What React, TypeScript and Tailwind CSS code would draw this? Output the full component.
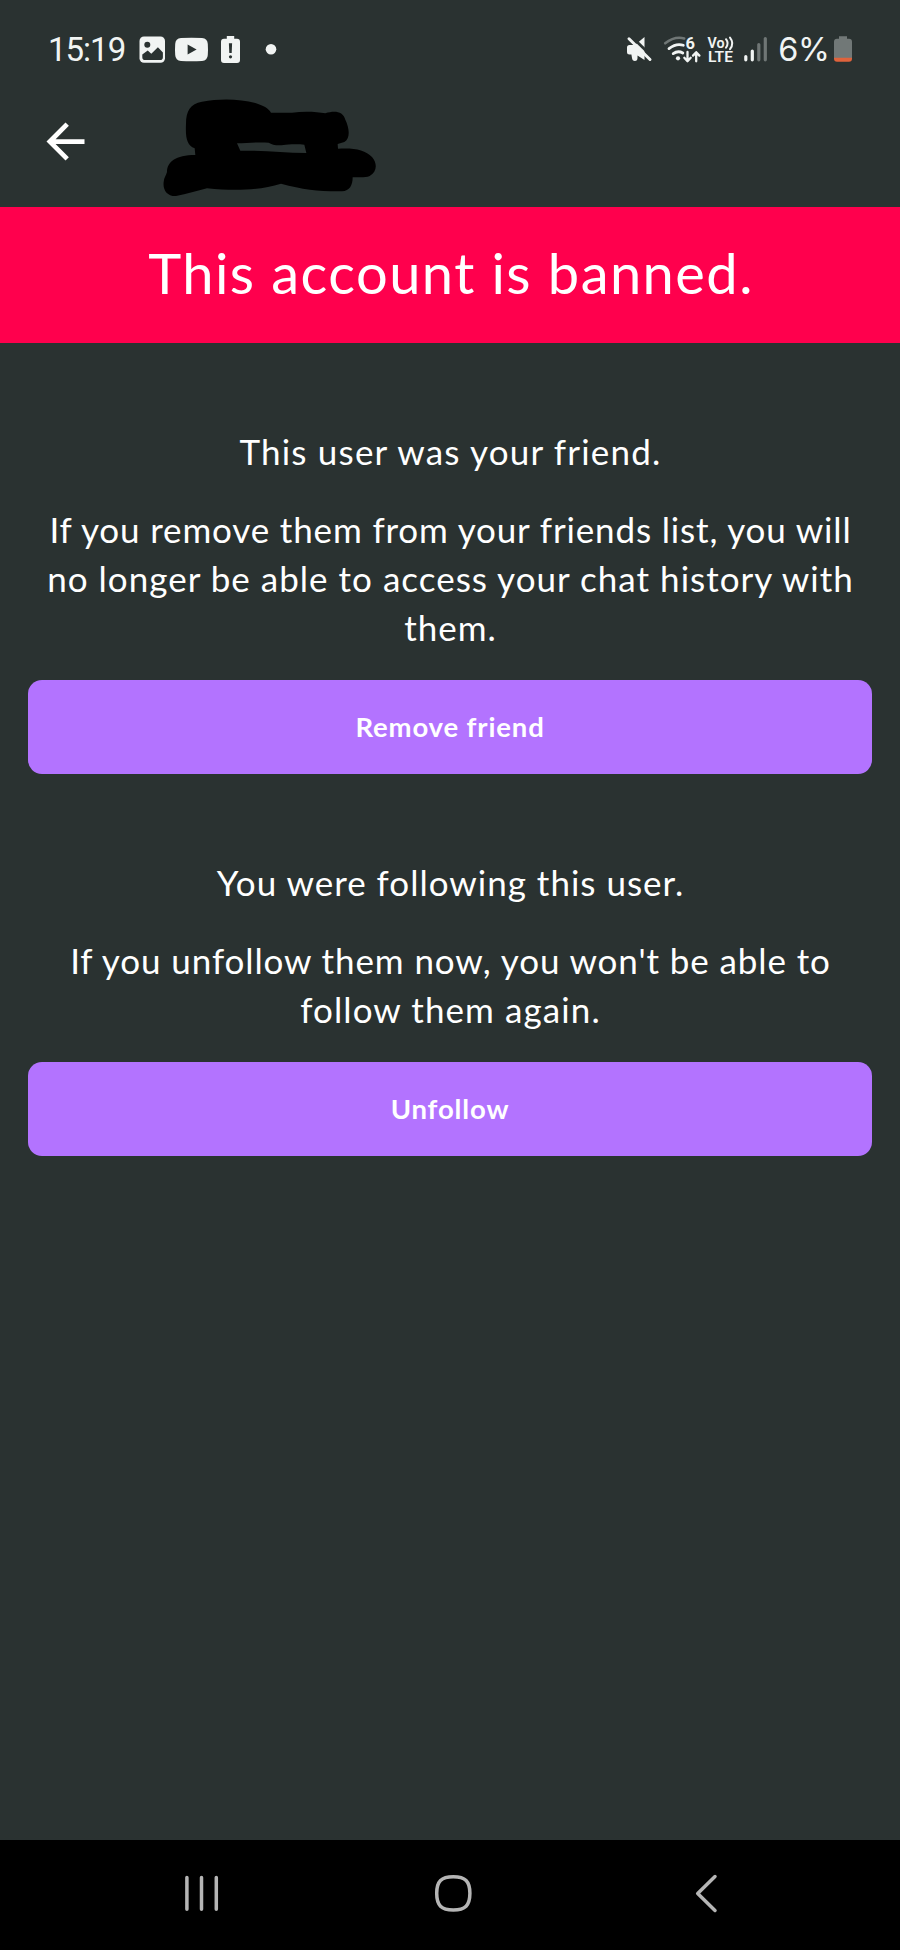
import type { ReactNode } from "react";

function NotificationIcons() {
  return (
    <svg className="h-[40px] w-[142px]" viewBox="136 30 142 40" fill="#f1f4f3">
      {/* gallery */}
      <rect x="139.5" y="36.5" width="25.5" height="26.3" rx="4.5" />
      <circle cx="147.3" cy="44.8" r="3" fill="#2a3231" />
      <path
        d="M142.3 57.2v-2.6l5.4-4.2 3.6 3.4 6.6-6.6 5 5.3v4.7q0 2.8-2.8 2.8h-15q-2.8 0-2.8-2.8z"
        fill="#2a3231"
      />
      {/* video */}
      <path d="M181 38q10.500-.7 21 0 5.500.4 5.800 6 .4 5.500 0 11-.3 5.600-5.800 6-10.500.7-21 0-5.500-.4-5.800-6-.4-5.500 0-11 .3-5.600 5.800-6z" />
      <path d="M187.600 44.600v10l9-5z" fill="#2a3231" />
      {/* battery alert */}
      <path d="M226.800 36h7.400v2.700h2.800q3 0 3 3V60q0 3-3 3h-13q-3 0-3-3V41.700q0-3 3-3h2.800z" />
      <path d="M228.900 43.300h3.200l-.4 9.600h-2.400z" fill="#2a3231" />
      <circle cx="230.500" cy="56.800" r="1.600" fill="#2a3231" />
      <circle cx="271" cy="49.200" r="5.300" />
    </svg>
  );
}

function SystemIcons() {
  return (
    <svg className="h-[40px] w-[148px]" viewBox="624 30 148 40" fill="none">
      {/* muted speaker */}
      <path
        d="M629.500 45h5.500L644.500 37v23l-7-4.500v2.500q0 3-2.600 3t-2.900-3l-.6-3.600h-1.900q-2.500 0-2.500-2.500v-4.400q0-2.500 2.500-2.500z"
        fill="#f1f4f3"
      />
      <path d="M631 36l22.500 22" stroke="#2a3231" strokeWidth="2.800" />
      <path d="M629 38.800l21 20.700" stroke="#f1f4f3" strokeWidth="3" strokeLinecap="round" />
      {/* wifi 6 */}
      <path d="M665.200 43.300q9.300-7.400 19-4.900" stroke="#6f7675" strokeWidth="2.600" strokeLinecap="round" />
      <path d="M669 48.600q7.500-5.800 14.300-3.300" stroke="#f1f4f3" strokeWidth="2.800" strokeLinecap="round" />
      <path d="M673.200 53.600q4.800-3.400 9.600-.6" stroke="#f1f4f3" strokeWidth="2.800" strokeLinecap="round" />
      <circle cx="678" cy="58.300" r="2.100" fill="#f1f4f3" />
      <text x="685.500" y="48.500" fontFamily="Roboto, sans-serif" fontWeight="700" fontSize="16.500" fill="#f1f4f3">6</text>
      <path
        d="M687.500 52v8.600M684.300 57.800l3.200 3.400 3.200-3.400M696.200 61.300v-8.500M693 55.600l3.200-3.400 3.200 3.400"
        stroke="#f1f4f3"
        strokeWidth="2.300"
        strokeLinecap="round"
        strokeLinejoin="round"
      />
      {/* VoLTE */}
      <g fontFamily="Roboto, sans-serif" fontWeight="600" fill="#f1f4f3">
        <text x="707.500" y="47.600" fontSize="14.500" textLength="17" lengthAdjust="spacingAndGlyphs">Vo</text>
        <text x="708" y="62.200" fontSize="15" textLength="25" lengthAdjust="spacingAndGlyphs">LTE</text>
      </g>
      <path d="M726 39.200q3.200 4.200 0 8.400M730 37.600q4.600 5.800 0 11.600" stroke="#f1f4f3" strokeWidth="2" strokeLinecap="round" />
      {/* signal */}
      <path d="M745.800 56.500v3.300M752.300 51v8.800" stroke="#f1f4f3" strokeWidth="3.200" strokeLinecap="round" />
      <path d="M758.800 44.500v15.300M765.300 38.500v21.300" stroke="#6f7675" strokeWidth="3.200" strokeLinecap="round" />
    </svg>
  );
}

function BatteryIcon() {
  return (
    <svg className="h-[40px] w-[20px]" viewBox="833 30 20 40">
      <path d="M839 36.200h8v2.600h2q3 0 3 3V58h-18V41.800q0-3 3-3h2z" fill="#717877" />
      <path d="M834 57.800h18v1q0 3-3 3h-12q-3 0-3-3z" fill="#e0633c" />
    </svg>
  );
}

function StatusBar() {
  return (
    <div className="flex h-[99px] items-center justify-between pr-[47px] pl-[48px] font-[Roboto,sans-serif] text-[#f1f4f3]">
      <div className="flex items-center">
        <span className="w-[88px] text-[33px] leading-[40px] tracking-[-1px]">15:19</span>
        <NotificationIcons />
      </div>
      <div className="flex items-center">
        <SystemIcons />
        <span className="flex w-[61px] justify-center pl-[3px] font-[Inter,sans-serif] text-[32.500px] leading-[40px] tracking-[-0.3px]">
          6%
        </span>
        <BatteryIcon />
      </div>
    </div>
  );
}

function Header() {
  return (
    <div className="flex h-[108px] items-start pl-[37px]">
      <svg className="mt-[14px] size-[57px]" viewBox="0 0 24 24" fill="#fff">
        <path d="M20 11H7.830l5.590-5.590L12 4l-8 8 8 8 1.410-1.410L7.830 13H20v-2z" />
      </svg>
      <svg className="ml-[69px] h-[100px] w-[214px]" viewBox="428 26 642 300">
        <path
          fill="#000"
          fillRule="evenodd"
          d="M497 100C497 62 510 40 545 34C600 24 660 26 705 38C728 45 745 54 752 67L815 67C850 62 890 64 915 69C945 60 968 64 975 88C988 115 990 145 972 155L952 161L953 175C1000 172 1035 178 1055 200C1072 220 1070 245 1048 257C1035 263 1015 260 997 261C997 285 988 302 965 303C900 304 850 298 782 280C720 299 650 303 560 294C530 301 500 312 467 317C440 318 427 298 430 275C431 262 437 256 440 245C440 215 465 194 525 194L523 174C500 165 495 145 497 100ZM650 159L660 181C730 180 790 188 858 188L852 163C830 160 800 162 790 164C770 167 755 163 745 157C715 155 680 158 650 159Z"
        />
      </svg>
    </div>
  );
}

function ActionButton({ children }: { children: ReactNode }) {
  return (
    <button className="mt-[28.500px] flex h-[94px] w-full items-center justify-center rounded-[14px] bg-[#b373ff] pb-[2px] text-[27.500px] font-bold tracking-[0.850px]">
      {children}
    </button>
  );
}

export default function App() {
  return (
    <div className="flex h-[1950px] w-[900px] flex-col bg-[#2a3231] font-[Lato,sans-serif] text-white">
      <StatusBar />
      <Header />
      <div className="flex h-[136px] items-center justify-center bg-[#ff004d] pb-[4px] pl-[2px] text-[56px] tracking-[1.450px]">
        This account is banned.
      </div>

      <main className="flex-1 px-7 text-center text-[35px] leading-[49px] whitespace-nowrap">
        <section className="pt-[84px]">
          <p className="pl-[1px] tracking-[1.200px]">This user was your friend.</p>
          <p className="mt-[28.500px] pl-[1px]">
            <span className="block tracking-[0.850px]">If you remove them from your friends list, you will</span>
            <span className="block tracking-[1.020px]">no longer be able to access your chat history with</span>
            <span className="block tracking-[1px]">them.</span>
          </p>
          <ActionButton>Remove friend</ActionButton>
        </section>
        <section className="pt-[84px]">
          <p className="pl-[1px] tracking-[1px]">You were following this user.</p>
          <p className="mt-[28.500px] pl-[1px]">
            <span className="block tracking-[0.900px]">If you unfollow them now, you won't be able to</span>
            <span className="block tracking-[1.100px]">follow them again.</span>
          </p>
          <ActionButton>Unfollow</ActionButton>
        </section>
      </main>

      <nav className="h-[110px] bg-black">
        <svg className="h-[110px] w-[900px]" viewBox="0 1840 900 110" fill="none" stroke="#b5b5b5" strokeWidth="3.500" strokeLinecap="round" strokeLinejoin="round">
          <path d="M186.900 1877.500v31.800M201.500 1877.500v31.800M216.300 1877.500v31.800" />
          <path d="M453.300 1876.700c12 0 16.600 4.500 16.600 16.600s-4.600 16.600-16.600 16.600-16.600-4.500-16.600-16.600 4.600-16.600 16.600-16.600z" />
          <path d="M715 1876.500l-17.300 17 17.300 17" />
        </svg>
      </nav>
    </div>
  );
}
